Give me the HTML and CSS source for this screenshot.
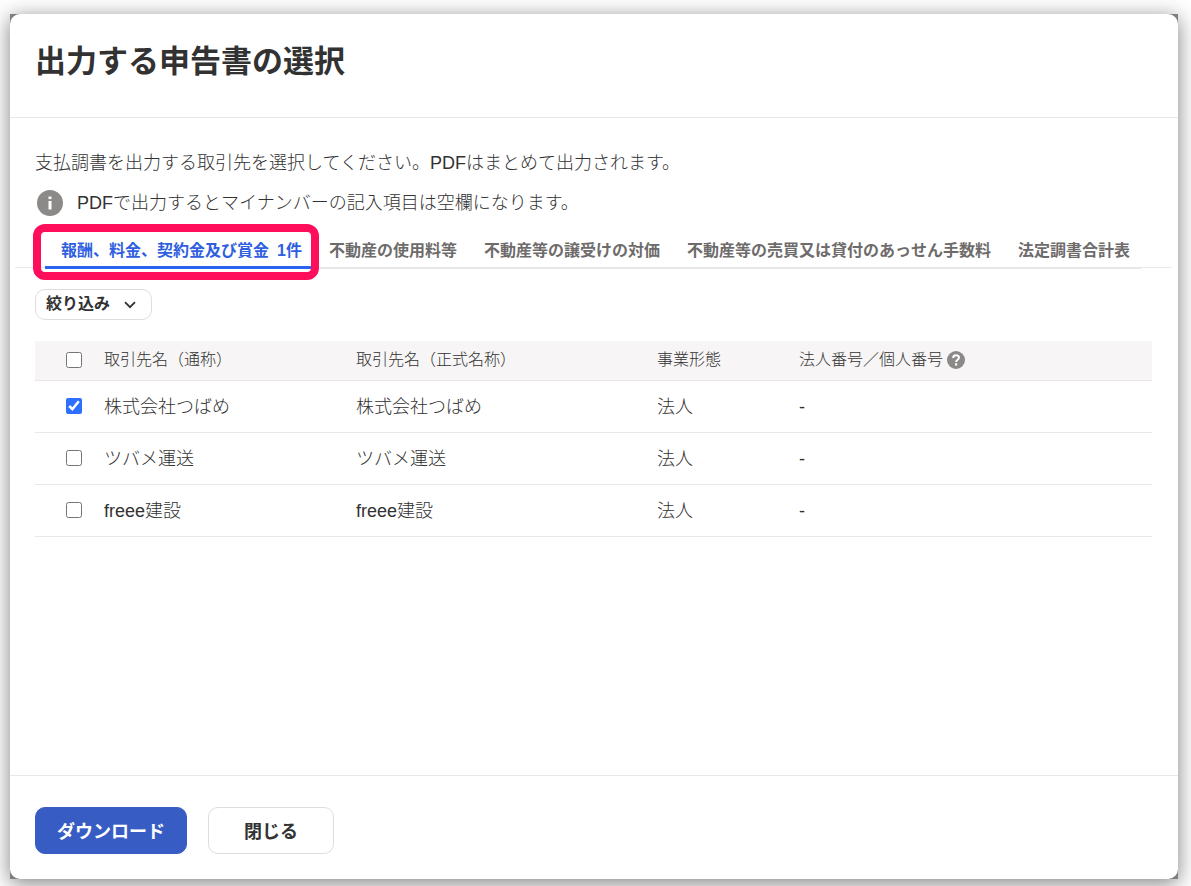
FILE: index.html
```
<!DOCTYPE html>
<html lang="ja">
<head>
    <meta charset="UTF-8">
    <meta name="viewport" content="width=device-width, initial-scale=1.0">
    <title>出力する申告書の選択</title>
    <link rel="stylesheet" href="styles.css">
</head>
<body>
    <div class="backdrop">
        <div class="modal" role="dialog" aria-labelledby="modalTitle">
            <header class="modal-header">
                <h1 id="modalTitle">出力する申告書の選択</h1>
            </header>

            <main class="modal-body">
                <p class="lead">支払調書を出力する取引先を選択してください。PDFはまとめて出力されます。</p>
                <p class="notice">
                    <svg class="info-icon" viewBox="0 0 26 26" aria-hidden="true">
                        <circle cx="13" cy="13" r="13" fill="#8c8989"/>
                        <rect x="11.5" y="6.5" width="3" height="2.6" fill="#fff"/>
                        <rect x="11.5" y="11" width="3" height="8.5" fill="#fff"/>
                    </svg>
                    <span>PDFで出力するとマイナンバーの記入項目は空欄になります。</span>
                </p>

                <!-- Tabs -->
                <div class="tabs" role="tablist">
                    <button type="button" class="tab active" role="tab" aria-selected="true"><span>報酬、料金、契約金及び賞金</span><span>1件</span></button>
                    <button type="button" class="tab" role="tab">不動産の使用料等</button>
                    <button type="button" class="tab" role="tab">不動産等の譲受けの対価</button>
                    <button type="button" class="tab" role="tab">不動産等の売買又は貸付のあっせん手数料</button>
                    <button type="button" class="tab" role="tab">法定調書合計表</button>
                </div>

                <button type="button" class="filter">
                    <span>絞り込み</span>
                    <svg class="chevron" viewBox="0 0 12 8" aria-hidden="true">
                        <path d="M1 1.2 L6 6.2 L11 1.2" fill="none" stroke="#323232" stroke-width="1.8"/>
                    </svg>
                </button>

                <!-- Partner list -->
                <table class="partners">
                    <thead>
                        <tr>
                            <th class="col-check"><input type="checkbox" aria-label="すべて選択"></th>
                            <th class="col-name">取引先名（通称）</th>
                            <th class="col-formal">取引先名（正式名称）</th>
                            <th class="col-type">事業形態</th>
                            <th>
                                <span class="with-help">法人番号／個人番号
                                    <svg class="help-icon" viewBox="0 0 18 18" aria-hidden="true">
                                        <circle cx="9" cy="9" r="9" fill="#8c8989"/>
                                        <path d="M6.1 7 C6.1 5.2 7.4 4.2 9 4.2 C10.7 4.2 12 5.2 12 6.8 C12 8.6 9.1 8.9 9.1 11" fill="none" stroke="#fff" stroke-width="2"/>
                                        <rect x="8" y="12.3" width="2.2" height="2.2" fill="#fff"/>
                                    </svg>
                                </span>
                            </th>
                        </tr>
                    </thead>
                    <tbody>
                        <tr>
                            <td class="col-check"><input type="checkbox" aria-label="株式会社つばめ" checked></td>
                            <td>株式会社つばめ</td>
                            <td>株式会社つばめ</td>
                            <td>法人</td>
                            <td>-</td>
                        </tr>
                        <tr>
                            <td class="col-check"><input type="checkbox" aria-label="ツバメ運送"></td>
                            <td>ツバメ運送</td>
                            <td>ツバメ運送</td>
                            <td>法人</td>
                            <td>-</td>
                        </tr>
                        <tr>
                            <td class="col-check"><input type="checkbox" aria-label="freee建設"></td>
                            <td>freee建設</td>
                            <td>freee建設</td>
                            <td>法人</td>
                            <td>-</td>
                        </tr>
                    </tbody>
                </table>
            </main>

            <footer class="modal-footer">
                <button type="button" class="btn btn-primary">ダウンロード</button>
                <button type="button" class="btn">閉じる</button>
            </footer>
        </div>
    </div>
</body>
</html>
```
FILE: styles.css
```
* {
    box-sizing: border-box;
}

body {
    margin: 0;
    padding: 14px 13px 7px 10px;
    min-height: 100vh;
    display: flex;
    background-color: #fff;
    color: #323232;
    font-family: "Liberation Sans", "Noto Sans CJK JP", sans-serif;
    font-size: 18px;
    font-weight: 300;
    line-height: 32px;
}

h1,
p {
    margin: 0;
}

button {
    font-family: inherit;
    font-weight: bold;
    color: inherit;
    background-color: #fff;
    white-space: nowrap;
    cursor: pointer;
}

.backdrop {
    flex: 1;
    display: flex;
    background-color: #7f7f7f;
    box-shadow: 0 4px 20px rgba(0, 0, 0, 0.5);
}

.modal {
    flex: 1;
    min-width: 0;
    display: flex;
    flex-direction: column;
    background-color: #fff;
    border-radius: 10px;
}

.modal-header {
    padding: 24px 25px 31px;
    border-bottom: 1px solid #e9e7e7;
}

.modal-header h1 {
    font-size: 31px;
    line-height: 48px;
}

.modal-body {
    flex: 1;
    padding: 29px 26px 28px 25px;
}

.notice {
    display: flex;
    align-items: center;
    gap: 14px;
    margin-top: 8px;
    padding-left: 2px;
}

.info-icon {
    width: 26px;
    height: 26px;
}

.tabs {
    display: flex;
    margin: 15px -20px 0;
    padding-left: 30px;
    border-bottom: 1px solid #e9e7e7;
}

.tab {
    display: flex;
    gap: 8px;
    height: 35px;
    margin-bottom: -2px;
    padding: 0 11px 0 16px;
    border: none;
    border-bottom: 2px solid #e9e7e7;
    color: #6e6b6b;
    font-size: 16px;
    line-height: 34px;
}

.tab.active {
    position: relative;
    border-bottom: 3px solid #2864f0;
    color: #2f5fe0;
}

/* highlight frame round the current tab */
.tab.active::after {
    content: "";
    position: absolute;
    inset: -10px -6px -14px -12px;
    border: 8px solid #ff0f5b;
    border-radius: 12px;
}

.filter {
    display: flex;
    align-items: center;
    gap: 14px;
    height: 31px;
    margin-top: 21px;
    padding: 0 15px 2px 10px;
    border: 1px solid #dfdcdc;
    border-radius: 10px;
    font-size: 16px;
    line-height: 28px;
}

.chevron {
    width: 12px;
    height: 8px;
    margin-top: 2px;
}

.partners {
    width: 100%;
    margin-top: 21px;
    border-collapse: separate;
    border-spacing: 0;
    table-layout: fixed;
}

.partners th,
.partners td {
    height: 52px;
    padding: 0;
    border-bottom: 1px solid #e9e7e7;
    text-align: left;
}

.partners th {
    height: 40px;
    padding-bottom: 2px;
    background-color: #f7f5f5;
    font-size: 16px;
    font-weight: 300;
}

.partners .col-check {
    width: 69px;
    padding-bottom: 2px;
    padding-left: 31px;
}

.col-name {
    width: 252px;
}

.col-formal {
    width: 301px;
}

.col-type {
    width: 142px;
}

input[type="checkbox"] {
    display: block;
    width: 16px;
    height: 16px;
    margin: 0;
    accent-color: #2f6fff;
}

.with-help {
    display: flex;
    align-items: center;
    gap: 4px;
}

.help-icon {
    width: 18px;
    height: 18px;
}

.modal-footer {
    display: flex;
    gap: 21px;
    padding: 31px 25px 25px;
    border-top: 1px solid #e9e7e7;
}

.btn {
    height: 47px;
    padding: 0 35px 2px;
    border: 1px solid #dfdcdc;
    border-radius: 10px;
    font-size: 18px;
}

.btn-primary {
    padding: 0 21px 2px;
    border-color: #375dc4;
    background-color: #375dc4;
    color: #fff;
}
```
